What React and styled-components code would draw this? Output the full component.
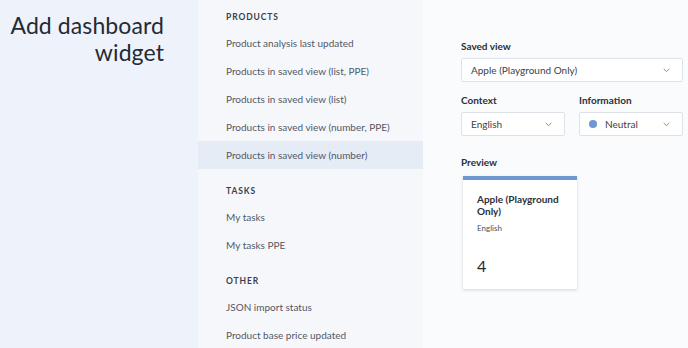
import React from 'react'
import styled, { createGlobalStyle } from 'styled-components'

const Global = createGlobalStyle`
  html, body { margin: 0; padding: 0; }
  body {
    font-family: Lato, "Open Sans", sans-serif;
    color: #2b2f38;
    background: #fafbfd;
  }
`

const sections = [
  {
    title: 'PRODUCTS',
    items: [
      'Product analysis last updated',
      'Products in saved view (list, PPE)',
      'Products in saved view (list)',
      'Products in saved view (number, PPE)',
      'Products in saved view (number)',
    ],
    active: 4,
  },
  { title: 'TASKS', items: ['My tasks', 'My tasks PPE'] },
  { title: 'OTHER', items: ['JSON import status', 'Product base price updated'] },
]

const Chevron = () => (
  <svg width="7" height="5" viewBox="0 0 7 5" fill="none">
    <path d="M1 1.2l2.5 2.4L6 1.2" stroke="#8a8f9b" strokeWidth="1" strokeLinecap="round" strokeLinejoin="round" />
  </svg>
)

const App = () => {
  return (
    <>
      <Global />
      <Page>
        <TitlePane>
          <Heading>Add dashboard widget</Heading>
        </TitlePane>
        <ListPane>
          {sections.map((s) => (
            <Section key={s.title}>
              <SectionTitle>{s.title}</SectionTitle>
              {s.items.map((it, i) => (
                <Item key={it} $active={s.active === i}>{it}</Item>
              ))}
            </Section>
          ))}
        </ListPane>
        <FormPane>
          <Field>
            <Label>Saved view</Label>
            <Select>
              <span>Apple (Playground Only)</span>
              <Chevron />
            </Select>
          </Field>
          <Row>
            <Field>
              <Label>Context</Label>
              <Select>
                <span>English</span>
                <Chevron />
              </Select>
            </Field>
            <Field>
              <Label>Information</Label>
              <Select>
                <SelectValue>
                  <Dot />
                  Neutral
                </SelectValue>
                <Chevron />
              </Select>
            </Field>
          </Row>
          <Preview>
            <Label>Preview</Label>
            <Card>
              <CardTitle>Apple (Playground Only)</CardTitle>
              <CardSub>English</CardSub>
              <CardNumber>4</CardNumber>
            </Card>
          </Preview>
        </FormPane>
      </Page>
    </>
  )
}

const Page = styled.div`
  display: grid;
  grid-template-columns: 198px 225px 1fr;
  width: 688px;
  height: 348px;
  overflow: hidden;
`

const TitlePane = styled.div`
  background: #eef2fa;
  padding: 12px 34px 0 8px;
`

const Heading = styled.h1`
  margin: 0;
  font-size: 23px;
  line-height: 27px;
  font-weight: 400;
  text-align: right;
  color: #262a33;
  letter-spacing: 0.1px;
`

const ListPane = styled.div`
  background: #f6f7fb;
  padding-top: 9px;
`

const Section = styled.div`
  margin-bottom: 14px;
`

const SectionTitle = styled.div`
  padding-left: 28px;
  height: 16px;
  line-height: 16px;
  margin-bottom: 4px;
  font-size: 8.5px;
  font-weight: 700;
  letter-spacing: 0.9px;
  color: #3b3f4a;
`

const Item = styled.div`
  height: 28px;
  line-height: 28px;
  padding-left: 28px;
  font-size: 10px;
  color: #525764;
  background: ${(p) => (p.$active ? '#e6ecf6' : 'transparent')};
`

const FormPane = styled.div`
  background: #fafbfd;
  padding: 38px 6px 0 38px;
  display: flex;
  flex-direction: column;
`

const Row = styled.div`
  display: grid;
  grid-template-columns: 104px 104px;
  gap: 14px;
  margin-top: 10px;
`

const Field = styled.div`
  display: flex;
  flex-direction: column;
`

const Preview = styled(Field)`
  margin-top: 18px;
`

const Label = styled.div`
  font-size: 10px;
  font-weight: 700;
  color: #2b2f38;
  height: 16px;
  line-height: 16px;
  margin-bottom: 4px;
`

const Select = styled.div`
  display: flex;
  align-items: center;
  justify-content: space-between;
  height: 22px;
  padding: 0 12px 0 9px;
  background: #fff;
  border: 1px solid #dde1e8;
  border-radius: 2px;
  font-size: 10px;
  color: #3b3f4a;
`

const SelectValue = styled.span`
  display: flex;
  align-items: center;
  gap: 8px;
`

const Dot = styled.span`
  width: 8px;
  height: 8px;
  border-radius: 50%;
  background: #6f97cf;
`

const Card = styled.div`
  width: 114px;
  height: 113px;
  margin-left: 2px;
  margin-top: 2px;
  box-sizing: border-box;
  background: #fff;
  border-top: 4px solid #6f97cf;
  box-shadow: 0 1px 3px rgba(30, 40, 60, 0.18);
  padding: 13px 10px 0 14px;
`

const CardTitle = styled.div`
  font-size: 10px;
  font-weight: 700;
  line-height: 12px;
  color: #2b2f38;
`

const CardSub = styled.div`
  font-size: 8px;
  color: #4a4f5c;
  margin-top: 6px;
`

const CardNumber = styled.div`
  font-size: 16px;
  color: #262a33;
  margin-top: 23px;
`

export default App
